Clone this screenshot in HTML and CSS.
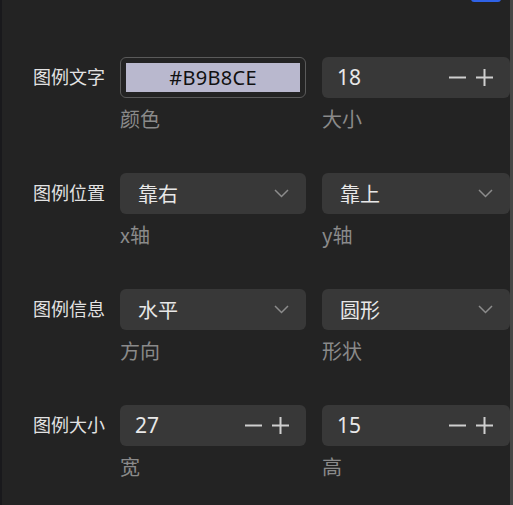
FILE: index.html
```html
<!DOCTYPE html>
<html lang="zh">
<head>
<meta charset="utf-8">
<link rel="stylesheet" href="styles.css">
</head>
<body>
<div class="panel">
  <div class="top-btn"></div>
  <div class="row">
    <div class="label">图例文字</div>
    <div class="field">
      <div class="color-box"><div class="swatch">#B9B8CE</div></div>
      <div class="sub">颜色</div>
    </div>
    <div class="field">
      <div class="box num">
        <span class="val">18</span>
        <span class="steps">
          <svg width="17" height="17" viewBox="0 0 17 17"><path d="M0 8.5H17" stroke="#cfcfcf" stroke-width="2"/></svg>
          <svg width="17" height="17" viewBox="0 0 17 17"><path d="M0 8.5H17M8.5 0V17" stroke="#cfcfcf" stroke-width="2"/></svg>
        </span>
      </div>
      <div class="sub">大小</div>
    </div>
  </div>
  <div class="row">
    <div class="label">图例位置</div>
    <div class="field">
      <div class="box sel">
        <span class="val cjk">靠右</span>
        <svg width="15" height="9" viewBox="0 0 15 9"><path d="M1 1L7.5 7.5L14 1" fill="none" stroke="#8c8c8c" stroke-width="1.5"/></svg>
      </div>
      <div class="sub">x轴</div>
    </div>
    <div class="field">
      <div class="box sel">
        <span class="val cjk">靠上</span>
        <svg width="15" height="9" viewBox="0 0 15 9"><path d="M1 1L7.5 7.5L14 1" fill="none" stroke="#8c8c8c" stroke-width="1.5"/></svg>
      </div>
      <div class="sub">y轴</div>
    </div>
  </div>
  <div class="row">
    <div class="label">图例信息</div>
    <div class="field">
      <div class="box sel">
        <span class="val cjk">水平</span>
        <svg width="15" height="9" viewBox="0 0 15 9"><path d="M1 1L7.5 7.5L14 1" fill="none" stroke="#8c8c8c" stroke-width="1.5"/></svg>
      </div>
      <div class="sub">方向</div>
    </div>
    <div class="field">
      <div class="box sel">
        <span class="val cjk">圆形</span>
        <svg width="15" height="9" viewBox="0 0 15 9"><path d="M1 1L7.5 7.5L14 1" fill="none" stroke="#8c8c8c" stroke-width="1.5"/></svg>
      </div>
      <div class="sub">形状</div>
    </div>
  </div>
  <div class="row">
    <div class="label">图例大小</div>
    <div class="field">
      <div class="box num">
        <span class="val">27</span>
        <span class="steps">
          <svg width="17" height="17" viewBox="0 0 17 17"><path d="M0 8.5H17" stroke="#cfcfcf" stroke-width="2"/></svg>
          <svg width="17" height="17" viewBox="0 0 17 17"><path d="M0 8.5H17M8.5 0V17" stroke="#cfcfcf" stroke-width="2"/></svg>
        </span>
      </div>
      <div class="sub">宽</div>
    </div>
    <div class="field">
      <div class="box num">
        <span class="val">15</span>
        <span class="steps">
          <svg width="17" height="17" viewBox="0 0 17 17"><path d="M0 8.5H17" stroke="#cfcfcf" stroke-width="2"/></svg>
          <svg width="17" height="17" viewBox="0 0 17 17"><path d="M0 8.5H17M8.5 0V17" stroke="#cfcfcf" stroke-width="2"/></svg>
        </span>
      </div>
      <div class="sub">高</div>
    </div>
  </div>
</div>
</body>
</html>
```

FILE: styles.css
```css
html, body {
  margin: 0;
  padding: 0;
  background: #232323;
}
body {
  width: 513px;
  height: 505px;
  overflow: hidden;
  font-family: "Noto Sans CJK SC", "Noto Sans", sans-serif;
}
.panel {
  position: relative;
  box-sizing: border-box;
  width: 513px;
  height: 505px;
  border-left: 2px solid #19191c;
  border-right: 3px solid #464646;
  padding: 57px 0 0 0;
  display: flex;
  flex-direction: column;
  gap: 42px;
}
.top-btn {
  position: absolute;
  top: -4px;
  left: 469px;
  width: 30px;
  height: 6px;
  border-radius: 3px;
  background: #2f62e6;
}
.row {
  display: grid;
  grid-template-columns: 102px 186px 188px;
  column-gap: 16px;
}
.label {
  padding-left: 31px;
  height: 41px;
  display: flex;
  align-items: center;
  font-size: 18px;
  color: #e2e2e2;
  white-space: nowrap;
  margin-top: -2px;
}
.field {
  display: flex;
  flex-direction: column;
}
.box {
  box-sizing: border-box;
  height: 41px;
  background: #383838;
  border-radius: 6px;
  display: flex;
  align-items: center;
  justify-content: space-between;
  padding: 0 17px 0 16px;
  color: #e8e8e8;
}
.val {
  font-family: "Noto Sans", sans-serif;
  font-size: 21px;
  line-height: 1;
}
.val.cjk {
  font-family: "Noto Sans CJK SC", sans-serif;
  font-size: 20px;
  padding-left: 2px;
}
.num .val {
  margin-left: -1px;
}
.steps {
  display: flex;
  gap: 10px;
  align-items: center;
}
.steps svg, .sel svg {
  display: block;
}
.color-box {
  box-sizing: border-box;
  height: 41px;
  border: 1px solid #5a5a5a;
  border-radius: 6px;
  padding: 5px;
}
.swatch {
  height: 29px;
  background: #b9b8ce;
  color: #111;
  font-family: "Noto Sans", sans-serif;
  font-size: 20px;
  line-height: 29px;
  text-align: center;
  letter-spacing: 0.3px;
}
.sub {
  margin-top: 9px;
  font-size: 20px;
  line-height: 24px;
  color: #8a8a8a;
}
```
